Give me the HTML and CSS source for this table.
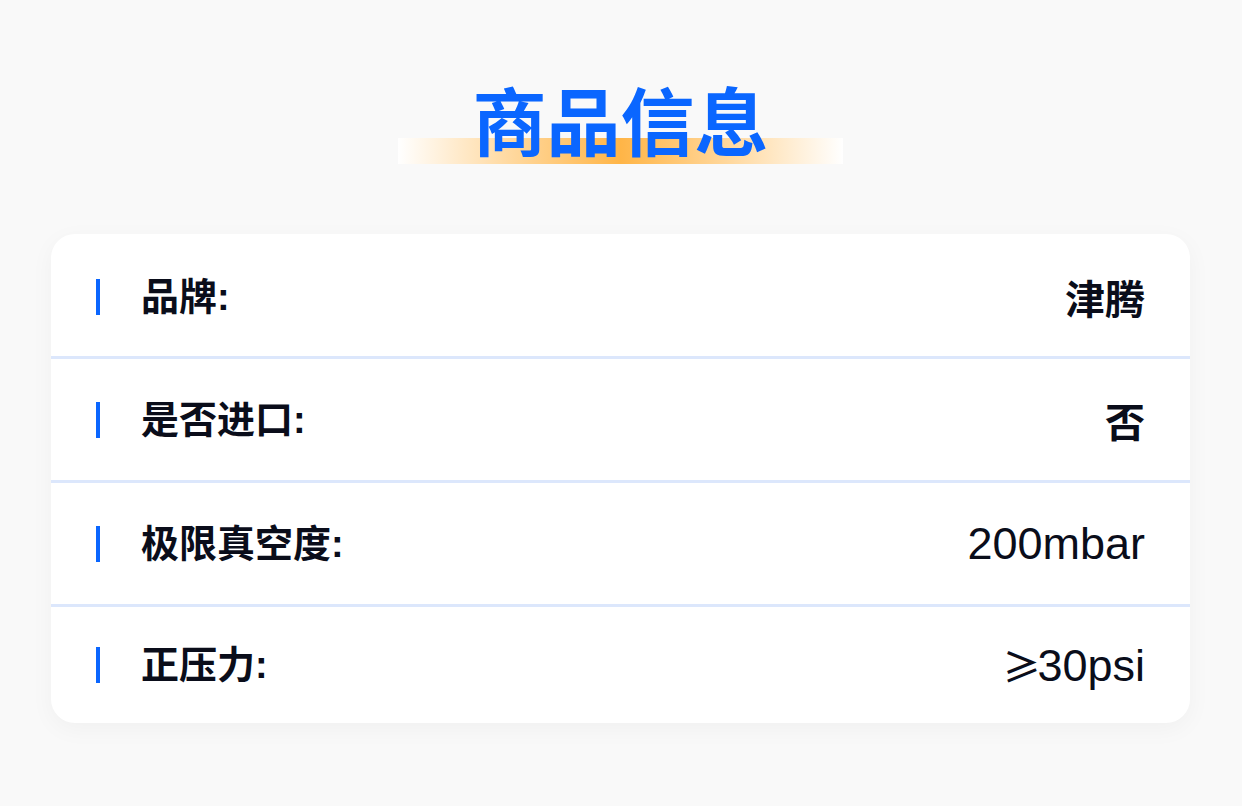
FILE: index.html
```html
<!DOCTYPE html>
<html lang="zh-CN">
<head>
<meta charset="utf-8">
<title>商品信息</title>
<link rel="stylesheet" href="styles.css">
</head>
<body>
<div class="page">
  <header class="header">
    <h1 class="title">商品信息</h1>
  </header>
  <section class="card">
    <div class="row">
      <span class="mark"></span>
      <span class="label">品牌:</span>
      <span class="value">津腾</span>
    </div>
    <div class="row">
      <span class="mark"></span>
      <span class="label">是否进口:</span>
      <span class="value">否</span>
    </div>
    <div class="row">
      <span class="mark"></span>
      <span class="label">极限真空度:</span>
      <span class="value value-latin">200mbar</span>
    </div>
    <div class="row">
      <span class="mark"></span>
      <span class="label">正压力:</span>
      <span class="value value-latin"><span class="sym">≥</span>30psi</span>
    </div>
  </section>
</div>
</body>
</html>
```
FILE: styles.css
```css
* { box-sizing: border-box; }
html, body {
  margin: 0;
  padding: 0;
}
body {
  background: #f9f9f9;
  font-family: "Liberation Sans", "Noto Sans CJK SC", sans-serif;
  color: #0a0d1a;
}
.page {
  width: 1242px;
  height: 806px;
  padding: 81px 52px 0 51px;
}
.header {
  display: flex;
  justify-content: center;
}
.title {
  margin: 0;
  width: 445px;
  height: 83px;
  padding-bottom: 9px;
  text-align: center;
  font-family: "Noto Sans CJK SC", sans-serif;
  font-weight: 700;
  font-size: 74px;
  line-height: 74px;
  color: #0a66ff;
  background-image: linear-gradient(90deg, #ffffff 0%, #ffd9a0 25%, #ffb547 50%, #ffd9a0 75%, #ffffff 100%);
  background-repeat: no-repeat;
  background-size: 100% 26px;
  background-position: left bottom;
}
.card {
  margin-top: 70px;
  background: #ffffff;
  border-radius: 24px;
  box-shadow: 0 6px 24px rgba(0, 0, 0, 0.04);
  overflow: hidden;
}
.row {
  display: flex;
  align-items: center;
  height: 124px;
  padding: 0 45px;
  border-bottom: 3px solid #dce7fc;
}
.row:first-child {
  height: 125px;
  padding-top: 3px;
}
.row:last-child {
  height: 116px;
  border-bottom: none;
}
.mark {
  width: 4px;
  height: 36px;
  background: #0a66ff;
  margin-right: 41px;
  flex: none;
}
.label {
  font-size: 38px;
  font-weight: 700;
  line-height: 40px;
}
.value {
  margin-left: auto;
  font-family: "Noto Sans CJK SC", sans-serif;
  font-size: 40px;
  font-weight: 700;
  line-height: 44px;
}
.value-latin {
  font-family: "Liberation Sans", "Noto Sans CJK SC", sans-serif;
  font-size: 45px;
  font-weight: 400;
}
.sym {
  font-family: "Noto Sans CJK SC", sans-serif;
  font-size: 38px;
  font-weight: 500;
  margin-right: -3px;
}
```
